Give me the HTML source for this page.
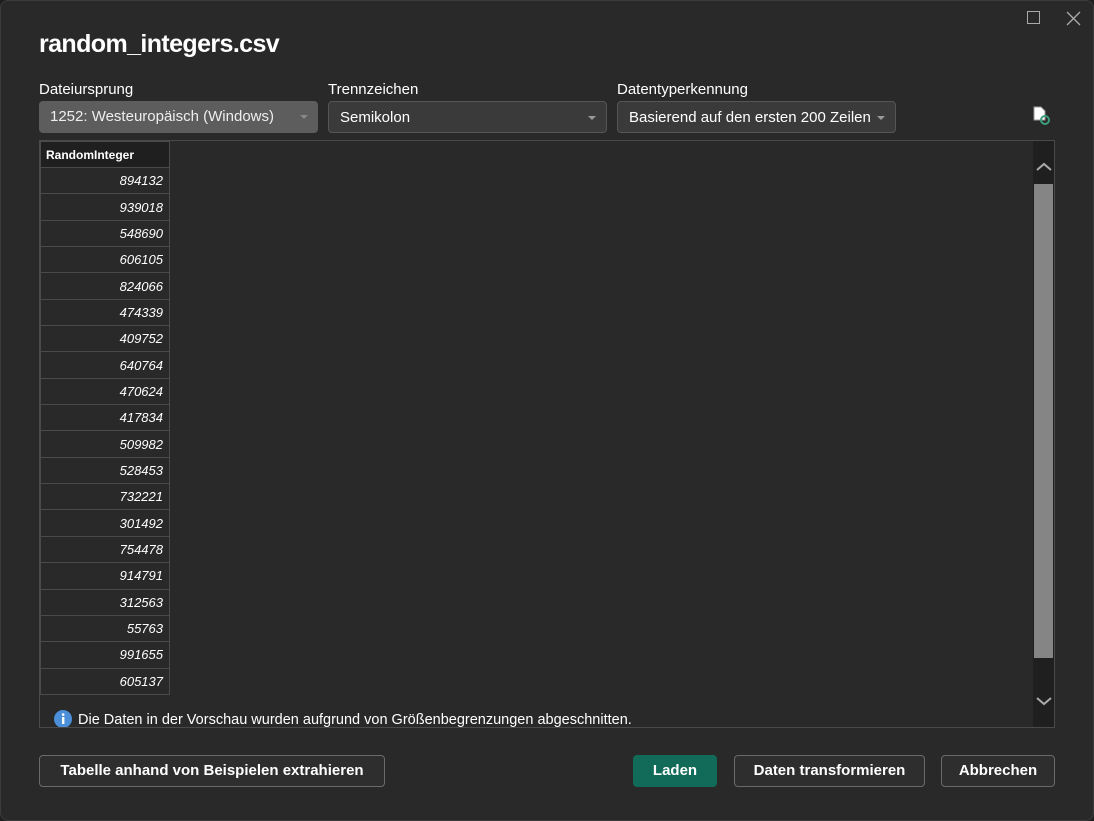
<!DOCTYPE html><html><head><style>
body{margin:0;width:1094px;height:821px;background:#1e1e1e;overflow:hidden;font-family:"Liberation Sans",sans-serif;}
.win{position:absolute;left:0;top:0;width:1094px;height:821px;background:#292929;border:1px solid #3c3c3c;border-radius:8px;box-sizing:border-box}
.t{position:absolute;color:#fff}
.sel{position:absolute;top:100px;height:32px;border-radius:4px;box-sizing:border-box;color:#fff;font-size:15px;line-height:32px;padding-left:11px;}
.arr{position:absolute;right:10px;top:14px;width:0;height:0;border-left:4px solid transparent;border-right:4px solid transparent;border-top:4px solid #999;}
.box{position:absolute;left:38px;top:139px;width:1016px;height:588px;border:1px solid #4a4a4a;box-sizing:border-box;overflow:hidden}
table{border-collapse:collapse;position:absolute;left:0;top:0}
td{border:1px solid #4a4a4a;width:129px;height:26.35px;padding:0 6px 0 0;text-align:right;font-style:italic;font-size:13px;color:#fff;box-sizing:border-box}
th{border:1px solid #4a4a4a;background:#1f1f1f;height:26px;text-align:left;padding-left:5px;font-size:12px;color:#fff;box-sizing:border-box}
.btn{position:absolute;top:754px;height:32px;box-sizing:border-box;border:1px solid #6a6a6a;border-radius:4px;color:#fff;font-weight:bold;font-size:15px;line-height:30px;text-align:center}
</style></head><body><div class="win">
<div class="t" style="left:38px;top:29px;font-size:25px;font-weight:bold;letter-spacing:-0.6px">random_integers.csv</div>
<svg style="position:absolute;left:1025px;top:9px" width="60" height="16"><rect x="1.5" y="1.5" width="12" height="12" fill="none" stroke="#aaa"/><path d="M41 2L54 15M54 2L41 15" stroke="#aaa" stroke-width="1.3"/></svg>
<div class="t" style="left:38px;top:80px;font-size:15px">Dateiursprung</div>
<div class="t" style="left:327px;top:80px;font-size:15px">Trennzeichen</div>
<div class="t" style="left:616px;top:80px;font-size:15px">Datentyperkennung</div>
<div class="sel" style="left:38px;width:279px;background:#5d5d5d;color:#eee">1252: Westeuropäisch (Windows)<div class="arr" style="border-top-color:#888"></div></div>
<div class="sel" style="left:327px;width:279px;background:#3a3a3a;border:1px solid #555">Semikolon<div class="arr"></div></div>
<div class="sel" style="left:616px;width:279px;background:#3a3a3a;border:1px solid #555">Basierend auf den ersten 200 Zeilen<div class="arr"></div></div>
<svg style="position:absolute;left:1032px;top:105px" width="20" height="20"><path d="M1 1H8L12 5V14H1Z" fill="#fff" stroke="#999"/><circle cx="12" cy="14" r="4" fill="none" stroke="#3c9d7c" stroke-width="2"/></svg>
<div class="box">
<table><tr><th>RandomInteger</th></tr>
<tr><td>894132</td></tr><tr><td>939018</td></tr><tr><td>548690</td></tr><tr><td>606105</td></tr><tr><td>824066</td></tr><tr><td>474339</td></tr><tr><td>409752</td></tr><tr><td>640764</td></tr><tr><td>470624</td></tr><tr><td>417834</td></tr><tr><td>509982</td></tr><tr><td>528453</td></tr><tr><td>732221</td></tr><tr><td>301492</td></tr><tr><td>754478</td></tr><tr><td>914791</td></tr><tr><td>312563</td></tr><tr><td>55763</td></tr><tr><td>991655</td></tr><tr><td>605137</td></tr></table>
<div style="position:absolute;left:993px;top:0;width:21px;height:588px;background:#1f1f1f"></div>
<div style="position:absolute;left:994px;top:43px;width:19px;height:474px;background:#858585"></div>
<svg style="position:absolute;left:995px;top:20px" width="18" height="12"><path d="M2 9L9 3L16 9" stroke="#aaa" stroke-width="2" fill="none"/></svg>
<svg style="position:absolute;left:995px;top:554px" width="18" height="12"><path d="M2 3L9 9L16 3" stroke="#aaa" stroke-width="2" fill="none"/></svg>
<svg style="position:absolute;left:14px;top:569px" width="18" height="18"><circle cx="9" cy="9" r="9" fill="#4a8fd8"/><rect x="8" y="7" width="2.4" height="7" fill="#fff"/><circle cx="9.2" cy="4.6" r="1.3" fill="#fff"/></svg>
<div class="t" style="left:38px;top:571px;font-size:14.5px">Die Daten in der Vorschau wurden aufgrund von Größenbegrenzungen abgeschnitten.</div>
</div>
<div class="btn" style="left:38px;width:346px;background:#2e2e2e">Tabelle anhand von Beispielen extrahieren</div>
<div class="btn" style="left:632px;width:84px;background:#116b58;border-color:#116b58">Laden</div>
<div class="btn" style="left:733px;width:191px;background:#2e2e2e">Daten transformieren</div>
<div class="btn" style="left:940px;width:114px;background:#2e2e2e">Abbrechen</div>
</div></body></html>
